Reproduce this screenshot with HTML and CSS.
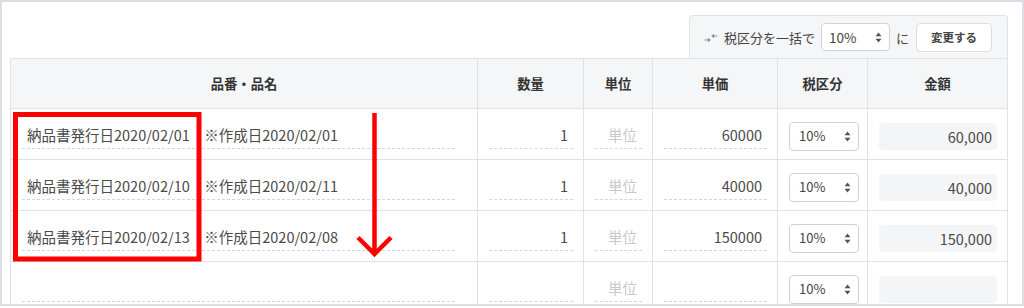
FILE: index.html
```html
<!DOCTYPE html>
<html lang="ja">
<head>
<meta charset="utf-8">
<link rel="stylesheet" href="styles.css">
</head>
<body>
<div class="frame">
  <div class="panel">
    <div class="toolbar-row">
      <div class="toolbar">
        <svg class="tb-icon" width="14" height="10" viewBox="0 0 14 10">
          <path d="M0.5 7 H5.5 M4 5.5 L5.8 7 L4 8.5" fill="none" stroke="#8a8f98" stroke-width="1.2"/>
          <path d="M13.5 3 H8.5 M10 1.5 L8.2 3 L10 4.5" fill="none" stroke="#8a8f98" stroke-width="1.2"/>
        </svg>
        <span class="tb-label">税区分を一括で</span>
        <div class="select tb-select"><span>10%</span><svg class="updown" width="7" height="11" viewBox="0 0 7 11"><path d="M3.5 0.5 L6.5 4.3 H0.5 Z M3.5 10.5 L6.5 6.7 H0.5 Z" fill="#555"/></svg></div>
        <span class="tb-label">に</span>
        <button class="btn">変更する</button>
      </div>
    </div>
    <div class="grid">
      <div class="th">品番・品名</div>
      <div class="th">数量</div>
      <div class="th">単位</div>
      <div class="th">単価</div>
      <div class="th">税区分</div>
      <div class="th">金額</div>

      <div class="td c-name"><div class="field">納品書発行日2020/02/01　※作成日2020/02/01</div></div>
      <div class="td"><div class="field num">1</div></div>
      <div class="td"><div class="field ph">単位</div></div>
      <div class="td"><div class="field num">60000</div></div>
      <div class="td"><div class="select"><span>10%</span><svg class="updown" width="7" height="11" viewBox="0 0 7 11"><path d="M3.5 0.5 L6.5 4.3 H0.5 Z M3.5 10.5 L6.5 6.7 H0.5 Z" fill="#555"/></svg></div></div>
      <div class="td"><div class="amount">60,000</div></div>

      <div class="td c-name"><div class="field">納品書発行日2020/02/10　※作成日2020/02/11</div></div>
      <div class="td"><div class="field num">1</div></div>
      <div class="td"><div class="field ph">単位</div></div>
      <div class="td"><div class="field num">40000</div></div>
      <div class="td"><div class="select"><span>10%</span><svg class="updown" width="7" height="11" viewBox="0 0 7 11"><path d="M3.5 0.5 L6.5 4.3 H0.5 Z M3.5 10.5 L6.5 6.7 H0.5 Z" fill="#555"/></svg></div></div>
      <div class="td"><div class="amount">40,000</div></div>

      <div class="td c-name"><div class="field">納品書発行日2020/02/13　※作成日2020/02/08</div></div>
      <div class="td"><div class="field num">1</div></div>
      <div class="td"><div class="field ph">単位</div></div>
      <div class="td"><div class="field num">150000</div></div>
      <div class="td"><div class="select"><span>10%</span><svg class="updown" width="7" height="11" viewBox="0 0 7 11"><path d="M3.5 0.5 L6.5 4.3 H0.5 Z M3.5 10.5 L6.5 6.7 H0.5 Z" fill="#555"/></svg></div></div>
      <div class="td"><div class="amount">150,000</div></div>

      <div class="td c-name"><div class="field"></div></div>
      <div class="td"><div class="field num"></div></div>
      <div class="td"><div class="field ph">単位</div></div>
      <div class="td"><div class="field num"></div></div>
      <div class="td"><div class="select"><span>10%</span><svg class="updown" width="7" height="11" viewBox="0 0 7 11"><path d="M3.5 0.5 L6.5 4.3 H0.5 Z M3.5 10.5 L6.5 6.7 H0.5 Z" fill="#555"/></svg></div></div>
      <div class="td"><div class="amount"></div></div>
    </div>
  </div>
  <svg class="annot" width="1024" height="308" viewBox="0 0 1024 308">
    <rect x="15.5" y="114.5" width="183.5" height="144.5" fill="none" stroke="#ff0000" stroke-width="5"/>
    <line x1="374.5" y1="113" x2="374.5" y2="253" stroke="#ff0000" stroke-width="4.5"/>
    <polyline points="358,237.5 374.5,254 391,237.5" fill="none" stroke="#ff0000" stroke-width="4.5" stroke-linejoin="miter"/>
  </svg>
</div>
</body>
</html>
```

FILE: styles.css
```css
* { box-sizing: border-box; }
html, body { margin: 0; padding: 0; background: #fff; }
body {
  font-family: "Noto Sans CJK JP", "Liberation Sans", sans-serif;
  color: #444;
}
.frame {
  position: relative;
  width: 1024px;
  height: 306px;
  border: 2px solid #dadfe6;
  overflow: hidden;
  padding: 13px 0 0 8px;
}
.panel {
  width: 998px;
}
.toolbar-row {
  display: flex;
  justify-content: flex-end;
}
.toolbar {
  display: flex;
  align-items: center;
  gap: 6px;
  height: 43px;
  padding: 0 15px 0 14px;
  background: #f5f6f8;
  border: 1px solid #dfe2e7;
  border-bottom: none;
  border-radius: 4px 4px 0 0;
}
.toolbar > * { flex-shrink: 0; }
.tb-icon { display: block; margin-top: 1px; }
.tb-label {
  font-size: 13px;
  color: #444;
  line-height: 1;
  white-space: nowrap;
}
.select {
  display: flex;
  align-items: center;
  justify-content: space-between;
  width: 70px;
  height: 29px;
  padding: 0 7px 0 9px;
  background: #fff;
  border: 1px solid #cfd3d9;
  border-radius: 4px;
  font-size: 13px;
  color: #444;
}
.select span { margin-top: -2px; }
.tb-select {
  width: 69px;
  height: 28px;
  padding-left: 7px;
  font-size: 13.5px;
}
.tb-select span { margin-top: 0; }
.updown { display: block; }
.btn {
  height: 29px;
  width: 76px;
  margin-left: 1px;
  padding: 0;
  background: #fff;
  border: 1px solid #dcdfe4;
  border-radius: 4px;
  font-family: "Noto Sans CJK JP", sans-serif;
  font-size: 11.5px;
  font-weight: 700;
  color: #444;
}
.grid {
  display: grid;
  grid-template-columns: 467px 106px 69px 125px 90px 140px;
  grid-auto-rows: 51px;
  grid-template-rows: 50px;
  border-left: 1px solid #dfe2e7;
  border-top: 1px solid #dfe2e7;
}
.th {
  display: flex;
  align-items: center;
  justify-content: center;
  background: #f5f6f8;
  border-right: 1px solid #dfe2e7;
  border-bottom: 1px solid #dfe2e7;
  font-size: 13.3px;
  font-weight: 700;
  color: #333;
  padding-bottom: 1px;
}
.td {
  padding: 13px 10px 0 11px;
  border-right: 1px solid #dfe2e7;
  border-bottom: 1px solid #dfe2e7;
}
.c-name { padding-right: 22px; }
.field {
  height: 27px;
  border-bottom: 1px dashed #d3d6dd;
  padding: 0 5px;
  font-size: 14.5px;
  line-height: 26px;
  color: #4a4a4a;
  white-space: nowrap;
}
.num { text-align: right; }
.ph { color: #c6c9cf; text-align: center; padding: 0 0 0 8px; }
.amount {
  height: 27px;
  margin-top: 1px;
  background: #f4f5f7;
  border-radius: 4px;
  padding: 0 5px;
  text-align: right;
  font-size: 14.5px;
  line-height: 27px;
  color: #4a4a4a;
}
.annot {
  position: absolute;
  left: -2px;
  top: -2px;
  pointer-events: none;
}
```
